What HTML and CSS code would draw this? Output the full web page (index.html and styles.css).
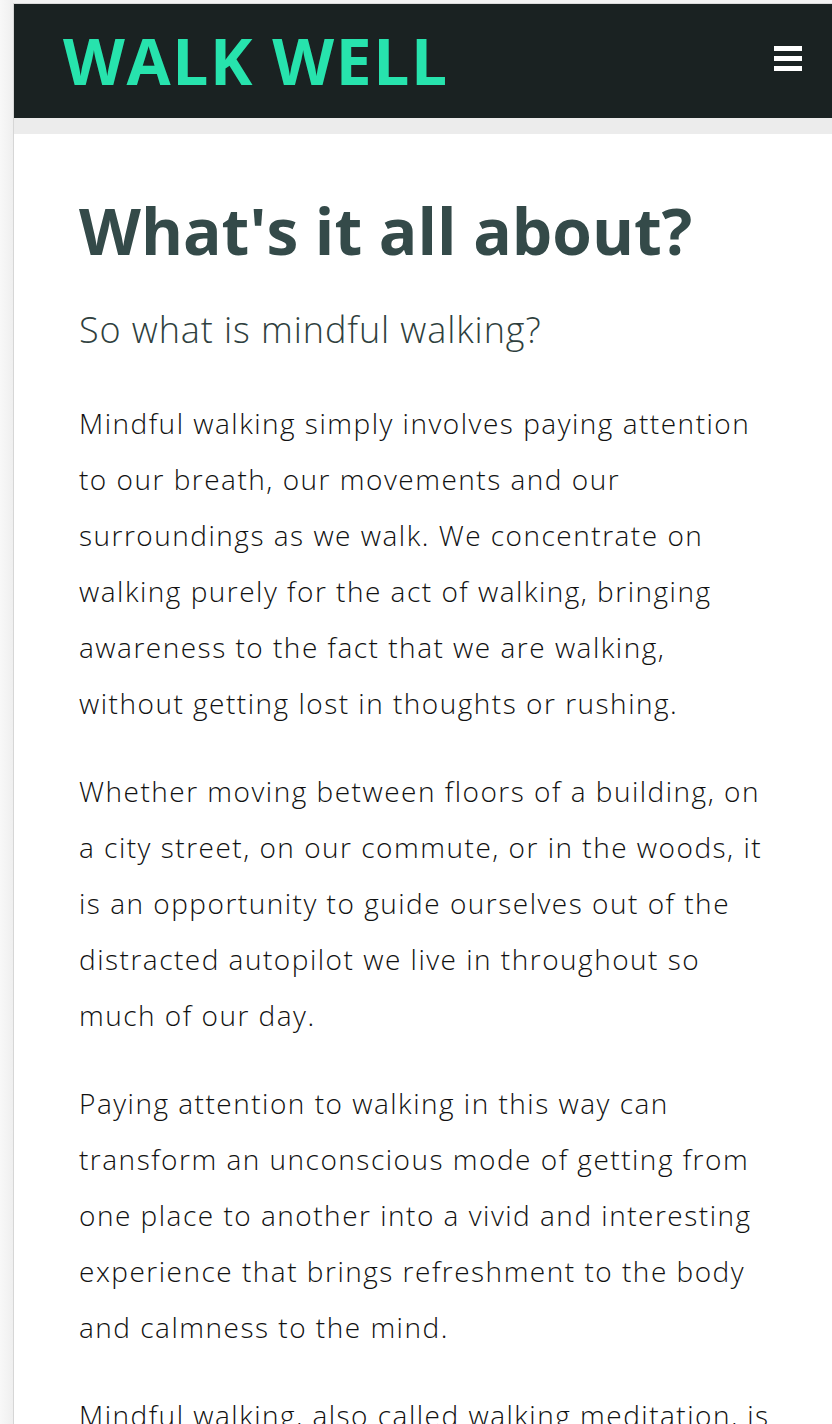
FILE: index.html
```html
<!DOCTYPE html>
<html lang="en">
<head>
<meta charset="utf-8">
<title>Walk Well</title>
<link rel="stylesheet" href="styles.css">
</head>
<body>
<div class="page">
  <header class="site-header">
    <a class="logo" href="#">WALK WELL</a>
    <button class="menu-btn" aria-label="Menu">
      <span></span><span></span><span></span>
    </button>
  </header>
  <div class="band"></div>
  <main class="content">
    <h1>What's it all about?</h1>
    <h2>So what is mindful walking?</h2>
    <p>Mindful walking simply involves paying attention to our breath, our movements and our surroundings as we walk. We concentrate on walking purely for the act of walking, bringing awareness to the fact that we are walking, without getting lost in thoughts or rushing.</p>
    <p>Whether moving between floors of a building, on a city street, on our commute, or in the woods, it is an opportunity to guide ourselves out of the distracted autopilot we live in throughout so much of our day.</p>
    <p>Paying attention to walking in this way can transform an unconscious mode of getting from one place to another into a vivid and interesting experience that brings refreshment to the body and calmness to the mind.</p>
    <p>Mindful walking, also called walking meditation, is a simple practice that anyone can do, wherever they are.</p>
  </main>
</div>
</body>
</html>
```

FILE: styles.css
```css
html, body {
  margin: 0;
  padding: 0;
}
body {
  background: linear-gradient(to right, #f8f8f8, #efefef 13px, #f3f3f3 13px);
  overflow: hidden;
  height: 1424px;
}
.page {
  margin: 3px 0 0 13px;
  border-top: 1px solid #dadada;
  border-left: 1px solid #d6d6d6;
  background: #fff;
  height: 1420px;
  overflow: hidden;
}
.site-header {
  background: #1a2222;
  height: 114px;
  display: flex;
  align-items: center;
  justify-content: space-between;
  padding: 0 30px 0 49px;
}
.logo {
  font-family: "Open Sans", sans-serif;
  font-weight: 700;
  font-size: 64px;
  letter-spacing: 1.6px;
  color: #27e3ad;
  text-decoration: none;
  line-height: 1;
}
.menu-btn {
  background: none;
  border: 0;
  padding: 0;
  display: flex;
  flex-direction: column;
  gap: 5px;
  width: 28px;
  margin-top: -6px;
}
.menu-btn span {
  display: block;
  height: 5px;
  background: #fff;
}
.band {
  height: 16px;
  background: #ececec;
}
.content {
  padding: 57px 0 0 65px;
  width: 694px;
}
h1 {
  font-family: "Open Sans", sans-serif;
  font-weight: 700;
  font-size: 64px;
  line-height: 80px;
  color: #344a49;
  margin: 0 0 35px;
}
h2 {
  font-family: "Open Sans", sans-serif;
  font-weight: 300;
  font-size: 36px;
  letter-spacing: 0.9px;
  line-height: 48px;
  color: #2f3f3e;
  margin: 0 0 41px;
}
p {
  font-family: "Open Sans", sans-serif;
  font-weight: 300;
  font-size: 28px;
  letter-spacing: 1.5px;
  line-height: 56px;
  color: #111;
  margin: 0 0 32px;
}
```
